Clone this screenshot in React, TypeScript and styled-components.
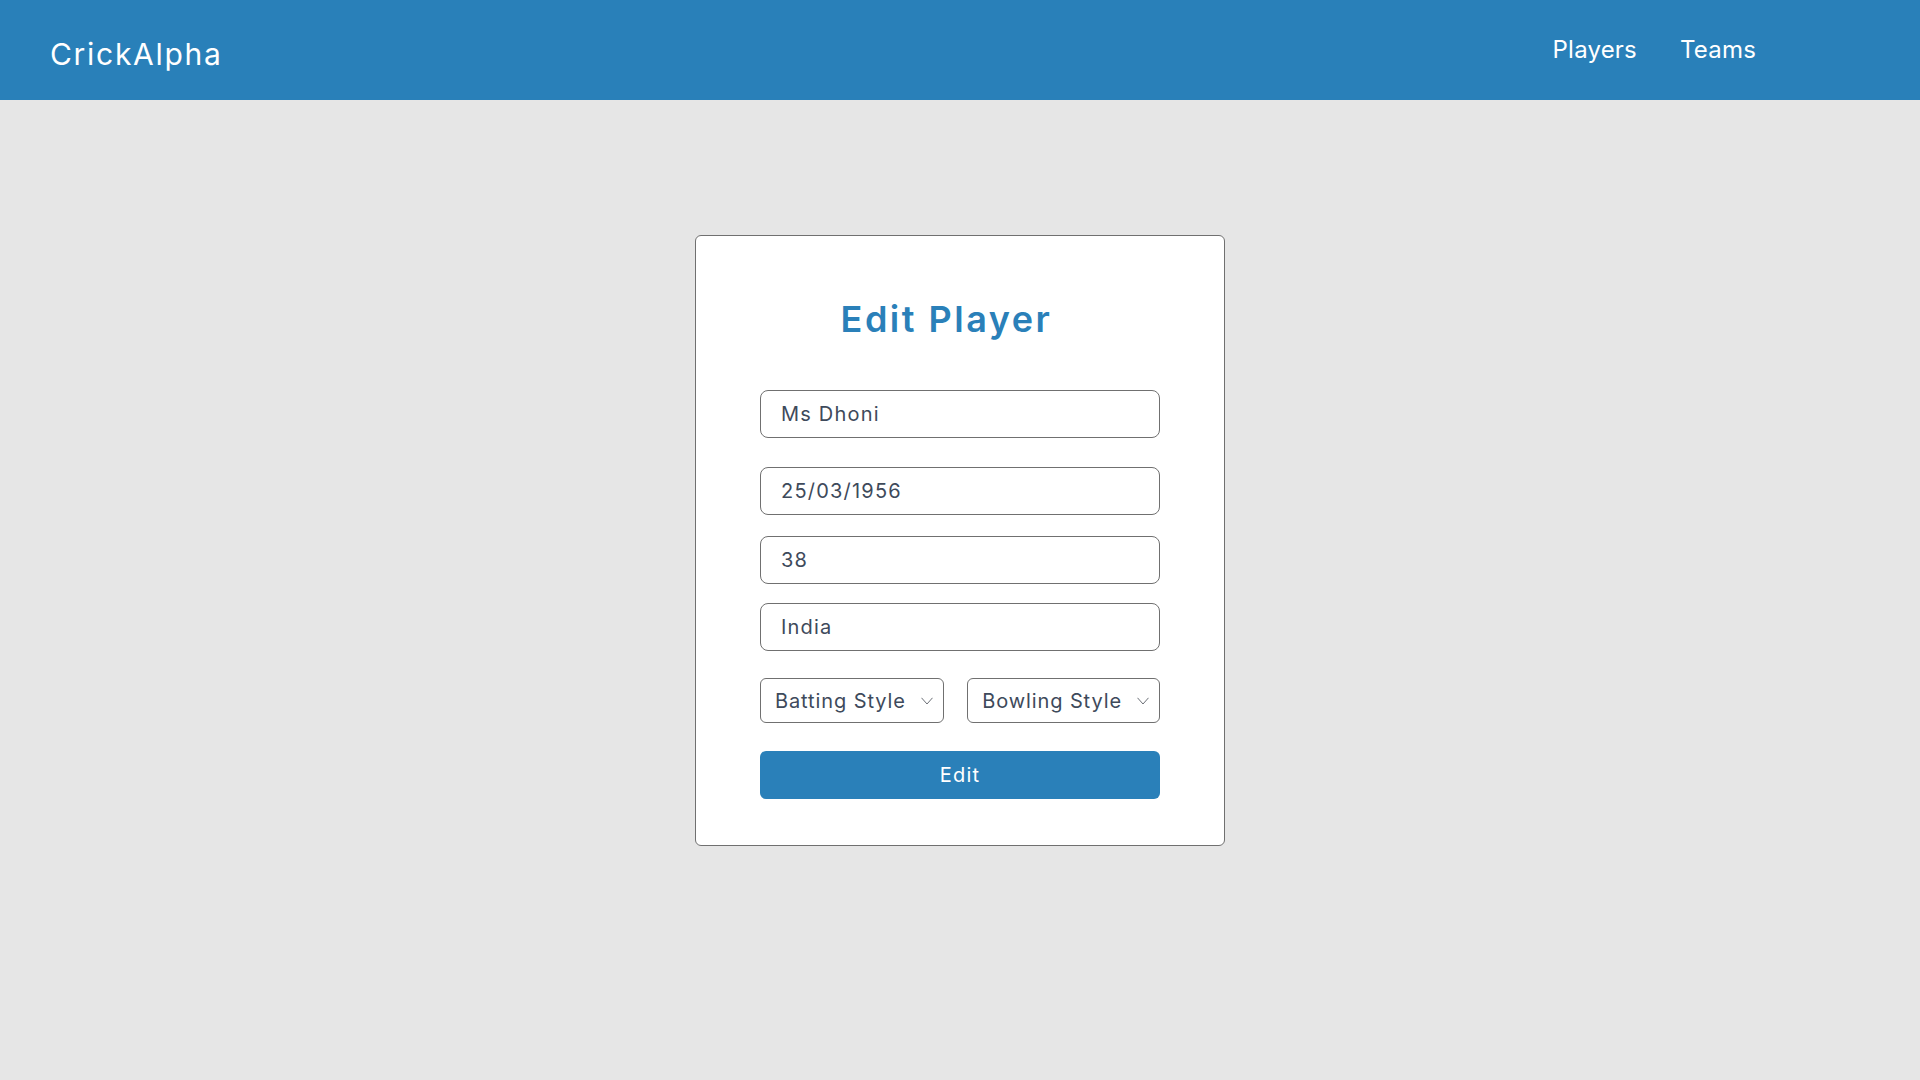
import React from "react";
import styled, { createGlobalStyle } from "styled-components";

const Global = createGlobalStyle`
  html, body { margin: 0; padding: 0; }
  body {
    background: #e6e6e6;
    font-family: Inter, "Noto Sans", sans-serif;
    min-height: 1080px;
  }
  * { box-sizing: border-box; }
`;

const Header = styled.header`
  height: 100px;
  background: #2980b9;
  display: flex;
  align-items: center;
  justify-content: space-between;
  padding: 0 164px 0 50px;
`;

const Logo = styled.div`
  color: #ffffff;
  font-family: Inter, "Noto Sans", sans-serif;
  font-size: 30px;
  font-weight: 400;
  letter-spacing: 1.7px;
  margin-top: 8px;
`;

const Nav = styled.nav`
  display: flex;
  gap: 43px;
  margin-top: -2px;
`;

const NavLink = styled.a`
  color: #ffffff;
  font-family: Inter, "Noto Sans", sans-serif;
  font-size: 24px;
  text-decoration: none;
  letter-spacing: 0.2px;
`;

const Main = styled.main`
  display: flex;
  justify-content: center;
  padding-top: 135px;
`;

const Card = styled.div`
  width: 530px;
  height: 611px;
  background: #ffffff;
  border: 1px solid #707070;
  border-radius: 6px;
  padding: 61px 64px 0;
`;

const Title = styled.h2`
  margin: 0 0 49px;
  padding-right: 27px;
  text-align: center;
  color: #2a80b9;
  font-family: Inter, "Noto Sans", sans-serif;
  font-size: 36px;
  line-height: 44px;
  font-weight: 600;
  letter-spacing: 2.5px;
`;

const Form = styled.form`
  display: flex;
  flex-direction: column;
`;

const Input = styled.input<{ $gap: number }>`
  height: 48px;
  width: 100%;
  border: 1px solid #707070;
  border-radius: 8px;
  padding: 0 20px;
  margin-bottom: ${(p) => p.$gap}px;
  font-family: Inter, "Noto Sans", sans-serif;
  font-size: 20px;
  color: #3e4a5b;
  letter-spacing: 1.2px;
  outline: none;
  background: #fff;
`;

const SelectRow = styled.div`
  display: flex;
  justify-content: space-between;
  margin-bottom: 28px;
`;

const Select = styled.div`
  height: 45px;
  display: flex;
  align-items: center;
  gap: 15px;
  border: 1px solid #707070;
  border-radius: 6px;
  padding: 0 10px 0 14px;
  font-family: Inter, "Noto Sans", sans-serif;
  font-size: 20px;
  color: #3e4a5b;
  letter-spacing: 0.9px;
  background: #fff;
`;

const Button = styled.button`
  height: 48px;
  width: 100%;
  border: none;
  border-radius: 6px;
  background: #2a80b9;
  color: #ffffff;
  font-family: Inter, "Noto Sans", sans-serif;
  font-size: 20px;
  letter-spacing: 1.2px;
  cursor: pointer;
`;

const Chevron = () => (
  <svg width="12" height="8" viewBox="0 0 12 8" fill="none">
    <path d="M0.5 0.8 L6 7 L11.5 0.8" stroke="#6b6f76" strokeWidth="1" />
  </svg>
);

export default function App() {
  return (
    <>
      <Global />
      <Header>
        <Logo>CrickAlpha</Logo>
        <Nav>
          <NavLink href="#">Players</NavLink>
          <NavLink href="#">Teams</NavLink>
        </Nav>
      </Header>
      <Main>
        <Card>
          <Title>Edit Player</Title>
          <Form onSubmit={(e) => e.preventDefault()}>
            <Input $gap={29} defaultValue="Ms Dhoni" />
            <Input $gap={21} defaultValue="25/03/1956" />
            <Input $gap={19} defaultValue="38" />
            <Input $gap={27} defaultValue="India" />
            <SelectRow>
              <Select>
                Batting Style
                <Chevron />
              </Select>
              <Select>
                Bowling Style
                <Chevron />
              </Select>
            </SelectRow>
            <Button type="submit">Edit</Button>
          </Form>
        </Card>
      </Main>
    </>
  );
}
